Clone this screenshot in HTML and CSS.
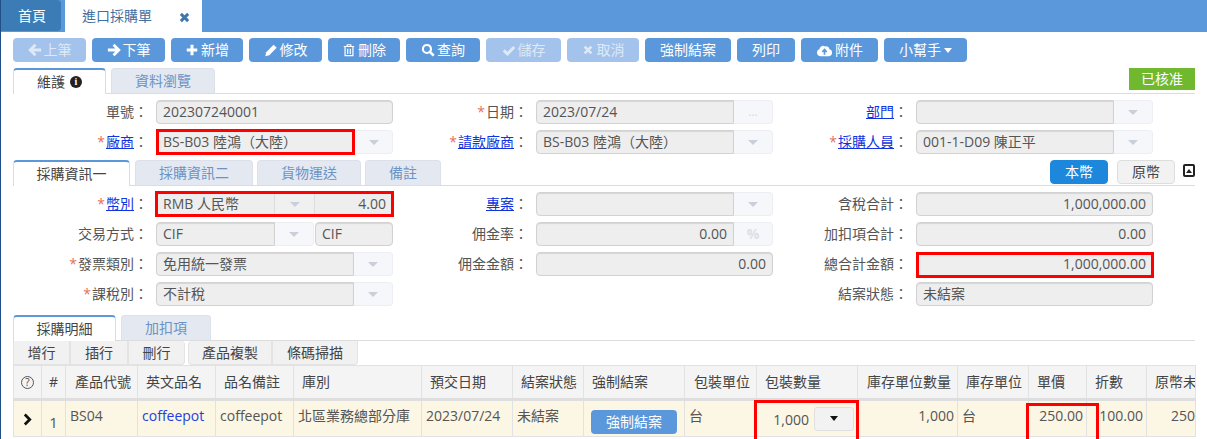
FILE: index.html
```html
<!DOCTYPE html>
<html lang="zh-Hant">
<head>
<meta charset="utf-8">
<title>進口採購單</title>
<link rel="stylesheet" href="styles.css">
</head>
<body>
<svg class="sprite" aria-hidden="true">
  <symbol id="i-left" viewBox="0 0 16 16"><path d="M8.5 2 L2.5 8 L8.5 14 M3 8 H15" fill="none" stroke="currentColor" stroke-width="3.2"/></symbol>
  <symbol id="i-right" viewBox="0 0 16 16"><path d="M7.5 2 L13.5 8 L7.5 14 M13 8 H1" fill="none" stroke="currentColor" stroke-width="3.2"/></symbol>
  <symbol id="i-plus" viewBox="0 0 16 16"><path d="M8 2 V14 M2 8 H14" fill="none" stroke="currentColor" stroke-width="3.4"/></symbol>
  <symbol id="i-pencil" viewBox="0 0 16 16"><path d="M11 2 L14.5 5.5 L6 14 L1.5 15 L2.5 10.5 Z" fill="currentColor"/></symbol>
  <symbol id="i-trash" viewBox="0 0 16 16"><path d="M2 4 H14 M6 4 V2 H10 V4 M3.5 4 V14.5 H12.5 V4 M6.5 6.5 V12.5 M9.5 6.5 V12.5" fill="none" stroke="currentColor" stroke-width="1.4"/></symbol>
  <symbol id="i-search" viewBox="0 0 16 16"><circle cx="6.8" cy="6.8" r="4.6" fill="none" stroke="currentColor" stroke-width="2.4"/><path d="M10.2 10.2 L14.5 14.5" stroke="currentColor" stroke-width="3"/></symbol>
  <symbol id="i-check" viewBox="0 0 16 16"><path d="M2 8.5 L6.3 12.5 L14 4.5" fill="none" stroke="currentColor" stroke-width="3.4"/></symbol>
  <symbol id="i-times" viewBox="0 0 16 16"><path d="M3.5 3.5 L12.5 12.5 M12.5 3.5 L3.5 12.5" fill="none" stroke="currentColor" stroke-width="3.6"/></symbol>
  <symbol id="i-cloud" viewBox="0 0 18 16"><path d="M4.5 14 A3.8 3.8 0 0 1 3.6 6.6 A4 4 0 0 1 9.6 3.6 A3.6 3.6 0 0 1 14.3 6.6 A3.8 3.8 0 0 1 14 14 Z" fill="currentColor"/><path d="M9 12.5 V7.5 M6.6 9.6 L9 7 L11.4 9.6" fill="none" stroke="#5b98db" stroke-width="1.8"/></symbol>
</svg>

<div class="app">
  <header class="topbar">
    <a class="home-tab">首頁</a>
    <a class="page-tab">進口採購單<svg class="page-close"><use href="#i-times"/></svg></a>
  </header>

  <main class="content">
    <div class="toolbar">
      <button class="btn off w73"><svg class="ic"><use href="#i-left"/></svg>上筆</button>
      <button class="btn w73"><svg class="ic"><use href="#i-right"/></svg>下筆</button>
      <button class="btn w72"><svg class="ic"><use href="#i-plus"/></svg>新增</button>
      <button class="btn w73"><svg class="ic"><use href="#i-pencil"/></svg>修改</button>
      <button class="btn w72"><svg class="ic"><use href="#i-trash"/></svg>刪除</button>
      <button class="btn w74"><svg class="ic"><use href="#i-search"/></svg>查詢</button>
      <button class="btn off w75"><svg class="ic"><use href="#i-check"/></svg>儲存</button>
      <button class="btn off w72"><svg class="ic sm"><use href="#i-times"/></svg>取消</button>
      <button class="btn w86">強制結案</button>
      <button class="btn w58">列印</button>
      <button class="btn w77"><svg class="ic wide"><use href="#i-cloud"/></svg>附件</button>
      <button class="btn w83">小幫手<span class="caret"></span></button>
    </div>

    <nav class="tabs t1">
      <a class="tab on w93">維護 <span class="info">i</span></a>
      <a class="tab w104">資料瀏覽</a>
      <span class="status">已核准</span>
    </nav>

    <section class="form">
      <label class="lbl">單號：</label>
      <div class="field"><span class="inp">202307240001</span></div>
      <label class="lbl"><i>*</i>日期：</label>
      <div class="field"><span class="inp joined">2023/07/24</span><span class="add w39 dots">...</span></div>
      <label class="lbl"><a>部門</a>：</label>
      <div class="field"><span class="inp joined"></span><span class="add w39"><b class="tri"></b></span></div>

      <label class="lbl"><i>*</i><a>廠商</a>：</label>
      <div class="field"><span class="inp joined">BS-B03 陸鴻（大陸）</span><span class="add w38"><b class="tri"></b></span><span class="mark m-vendor"></span></div>
      <label class="lbl"><i>*</i><a>請款廠商</a>：</label>
      <div class="field"><span class="inp joined">BS-B03 陸鴻（大陸）</span><span class="add w39"><b class="tri"></b></span></div>
      <label class="lbl"><i>*</i><a>採購人員</a>：</label>
      <div class="field"><span class="inp joined">001-1-D09 陳正平</span><span class="add w39"><b class="tri"></b></span></div>
    </section>

    <nav class="tabs t2">
      <a class="tab on w117">採購資訊一</a>
      <a class="tab w118">採購資訊二</a>
      <a class="tab w104">貨物運送</a>
      <a class="tab w76">備註</a>
      <div class="cur">
        <button class="cur-btn act">本幣</button>
        <button class="cur-btn">原幣</button>
        <span class="collapse"><b></b></span>
      </div>
    </nav>

    <section class="form">
      <label class="lbl"><i>*</i><a>幣別</a>：</label>
      <div class="field marked"><span class="inp joined w118i">RMB 人民幣</span><span class="add w40"><b class="tri"></b></span><span class="inp num mid">4.00</span><span class="mark m-cur"></span></div>
      <label class="lbl"><a>專案</a>：</label>
      <div class="field"><span class="inp joined"></span><span class="add w39"><b class="tri"></b></span></div>
      <label class="lbl">含稅合計：</label>
      <div class="field"><span class="inp num">1,000,000.00</span></div>

      <label class="lbl">交易方式：</label>
      <div class="field"><span class="inp joined w118i">CIF</span><span class="add w40 sep"><b class="tri"></b></span><span class="inp">CIF</span></div>
      <label class="lbl">佣金率：</label>
      <div class="field"><span class="inp joined num">0.00</span><span class="add w39 pct">%</span></div>
      <label class="lbl">加扣項合計：</label>
      <div class="field"><span class="inp num">0.00</span></div>

      <label class="lbl"><i>*</i>發票類別：</label>
      <div class="field"><span class="inp joined">免用統一發票</span><span class="add w39"><b class="tri"></b></span></div>
      <label class="lbl">佣金金額：</label>
      <div class="field"><span class="inp num">0.00</span></div>
      <label class="lbl">總合計金額：</label>
      <div class="field"><span class="inp num">1,000,000.00</span><span class="mark m-total"></span></div>

      <label class="lbl"><i>*</i>課稅別：</label>
      <div class="field"><span class="inp joined">不計稅</span><span class="add w39"><b class="tri"></b></span></div>
      <span></span><span></span>
      <label class="lbl">結案狀態：</label>
      <div class="field"><span class="inp">未結案</span></div>
    </section>

    <nav class="tabs t3">
      <a class="tab on w103">採購明細</a>
      <a class="tab w90">加扣項</a>
    </nav>

    <div class="grid-tools">
      <div class="gt-group"><button class="gt w57">增行</button><button class="gt w58b">插行</button><button class="gt w57">刪行</button></div>
      <div class="gt-group"><button class="gt w84">產品複製</button><button class="gt w86b">條碼掃描</button></div>
    </div>

    <table class="grid">
      <colgroup>
        <col class="c28"><col class="c24"><col class="c72"><col class="c78"><col class="c78"><col class="c128"><col class="c91"><col class="c71"><col class="c101"><col class="c72"><col class="c101"><col class="c100"><col class="c71"><col class="c58"><col class="c60"><col class="c49">
      </colgroup>
      <thead>
        <tr>
          <th class="ctr"><span class="help">?</span></th><th class="ctr">#</th><th>產品代號</th><th>英文品名</th><th>品名備註</th><th>庫別</th><th>預交日期</th><th>結案狀態</th><th>強制結案</th><th>包裝單位</th><th>包裝數量</th><th>庫存單位數量</th><th>庫存單位</th><th>單價</th><th>折數</th><th>原幣未稅金額</th>
        </tr>
      </thead>
      <tbody>
        <tr>
          <td class="ctr"><svg class="chev" viewBox="0 0 10 14"><path d="M2 1.5 L7.5 7 L2 12.5" fill="none" stroke="#111" stroke-width="3"/></svg></td>
          <td class="ctr low">1</td>
          <td>BS04</td>
          <td class="link">coffeepot</td>
          <td>coffeepot</td>
          <td>北區業務總部分庫</td>
          <td>2023/07/24</td>
          <td>未結案</td>
          <td class="ctr"><button class="cell-btn">強制結案</button></td>
          <td>台</td>
          <td class="qty"><span class="mark m-qty"></span><span class="low">1,000</span><span class="dd"><b></b></span></td>
          <td class="r">1,000</td>
          <td>台</td>
          <td class="r"><span class="mark m-price"></span>250.00</td>
          <td class="r">100.00</td>
          <td class="r clip">250,000.00</td>
        </tr>
      </tbody>
    </table>
  </main>
</div>
</body>
</html>
```

FILE: styles.css
```css
* { box-sizing: border-box; }
html, body { margin: 0; height: 100%; overflow: hidden; background: #fff; }
body { font: 14px/20px "Open Sans", "Noto Sans CJK TC", sans-serif; color: #444; }
.sprite { display: none; }
button { font: inherit; border: 0; padding: 0; }

.app { border-left: 1px solid #1f4f86; height: 439px; overflow: hidden; }

.topbar { height: 32px; background: #5b98db; display: flex; align-items: flex-start; }
.home-tab { width: 60px; height: 31px; background: #3c7cb6; color: #fff; border-radius: 0 4px 4px 0; display: flex; align-items: center; padding-left: 17px; }
.page-tab { margin-left: 4px; width: 137px; height: 32px; background: #fff; color: #44709f; display: flex; align-items: center; padding-left: 17px; }
.page-close { width: 13px; height: 13px; margin-left: 26px; margin-top: 3px; color: #3f78ac; }

.content { padding: 0 12px; }

.toolbar { display: flex; gap: 6px; padding-top: 6px; }
.btn { height: 24px; background: #5b98db; color: #fff; border-radius: 4px; display: flex; align-items: center; justify-content: center; white-space: nowrap; }
.btn.off { background: #a3c3ec; color: #dfe9f6; }
.ic { width: 14px; height: 14px; margin-right: 2px; }
.ic.sm { width: 12px; height: 12px; margin-right: 3px; }
.ic.wide { width: 17px; height: 15px; }
.w58 { width: 58px; } .w72 { width: 72px; } .w73 { width: 73px; } .w74 { width: 74px; }
.w75 { width: 75px; } .w77 { width: 77px; } .w83 { width: 83px; } .w86 { width: 86px; }
.caret { width: 0; height: 0; border: 4px solid transparent; border-top: 5px solid #fff; border-bottom: 0; margin-left: 3px; }

.tabs { display: flex; align-items: flex-start; gap: 4px; height: 26px; border-bottom: 1px solid #dcdcdc; }
.t1, .t2 { margin-top: 6px; }
.t3 { margin-top: 9px; }
.tab { height: 25px; background: #e4e8f1; color: #6c93c4; border: 1px solid #dbe0ea; border-bottom: 0; border-radius: 4px 4px 0 0; display: flex; align-items: center; justify-content: center; gap: 5px; }
.tab.on { background: #fff; color: #444; border-top: 2px solid #5b98db; border-left-color: #dcdcdc; border-right-color: #dcdcdc; height: 26px; margin-right: 1px; }
.w93 { width: 93px; } .w104 { width: 104px; } .w117 { width: 117px; } .w118 { width: 118px; }
.w76 { width: 76px; } .w103 { width: 103px; } .w90 { width: 90px; }
.info { width: 12px; height: 12px; border-radius: 50%; background: #222; color: #fff; font: bold 10px/12px "Liberation Serif", serif; text-align: center; }
.status { margin-left: auto; width: 66px; height: 22px; background: #70b92f; color: #fff; display: flex; align-items: center; justify-content: center; }

.cur { margin-left: auto; display: flex; align-items: flex-start; height: 24px; }
.cur-btn { width: 58px; height: 24px; border-radius: 4px; background: #f2f2f2; color: #444; border: 1px solid #dedede; margin-left: 9px; }
.cur-btn.act { background: #1d87dc; color: #fff; border-color: #1d87dc; margin-left: 0; }
.collapse { width: 12px; height: 13px; margin: 4px 0 0 8px; border: 2px solid #222; border-radius: 2px; display: flex; align-items: center; justify-content: center; }
.collapse b { width: 0; height: 0; border: 3px solid transparent; border-bottom: 4px solid #222; border-top: 0; }

.form { display: grid; grid-template-columns: repeat(3, 143px 237px); grid-auto-rows: 24px; row-gap: 6px; padding-top: 6px; }
.lbl { display: flex; justify-content: flex-end; align-items: center; padding-right: 8px; white-space: nowrap; color: #555; }
.lbl i { color: #e4705a; font-style: normal; margin-right: 1px; }
.lbl a { color: #1133dd; text-decoration: underline; }
.field { display: flex; position: relative; min-width: 0; }
.inp { flex: 1; min-width: 0; height: 24px; background: #eee; border: 1px solid #d2d2d2; border-radius: 4px; box-shadow: inset 0 1px 1px rgba(0,0,0,.1); padding: 0 6px; display: flex; align-items: center; white-space: nowrap; color: #555; }
.inp.joined { border-radius: 4px 0 0 4px; }
.inp.num { justify-content: flex-end; }
.inp.w118i { flex: none; width: 119px; }
.inp.mid { border-radius: 0 4px 4px 0; flex: 1; border-left: 0; }
.add { height: 24px; background: #f6f7fa; border: 1px solid #eceef3; border-left: 0; border-radius: 0 4px 4px 0; display: flex; align-items: center; justify-content: center; color: #d4d8de; }
.w38 { width: 38px; flex: none; } .w39 { width: 39px; flex: none; } .w40 { width: 40px; flex: none; }
.add.w40 { border-radius: 0; }
.add.sep { border-radius: 0 4px 4px 0; margin-right: 1px; width: 39px; }
.dots { font-size: 12px; }
.pct { font-weight: 700; color: #dbe0e7; }
.tri { width: 0; height: 0; border: 5px solid transparent; border-top: 5px solid #c9d0d9; border-bottom: 0; }

.marked .inp, .marked .add { border-color: #ddd; box-shadow: none; }
.marked .add { background: #f0f0f0; }

.mark { position: absolute; z-index: 2; border: 3px solid #f00; pointer-events: none; }
.m-vendor { top: -1px; left: 0; width: 199px; height: 26px; }
.m-cur { top: -1px; left: -1px; right: -1px; height: 26px; }
.m-total { top: 0; left: 0; right: -1px; height: 26px; }
.m-qty { top: -1px; left: -3px; right: -2px; height: 50px; }
.m-price { top: 2px; left: -3px; right: -13px; height: 50px; }

.grid-tools { display: flex; gap: 3px; height: 24px; }
.gt-group { display: flex; }
.gt { height: 24px; background: #f1f1f1; color: #444; border: 1px solid #e3e3e3; border-top: 0; }
.gt-group:last-child .gt:last-child { border-radius: 0 0 4px 0; }
.gt-group:last-child .gt:first-child { border-radius: 4px 0 0 4px; }
.gt-group:first-child .gt:last-child { border-radius: 0 4px 4px 0; }
.w57 { width: 57px; } .w58b { width: 58px; } .w84 { width: 84px; } .w86b { width: 86px; }

.grid { table-layout: fixed; width: 1182px; border-collapse: collapse; }
.c28 { width: 28px; } .c24 { width: 24px; } .c72 { width: 72px; } .c78 { width: 78px; }
.c128 { width: 128px; } .c91 { width: 91px; } .c71 { width: 71px; } .c101 { width: 101px; }
.c100 { width: 100px; } .c58 { width: 58px; } .c60 { width: 60px; } .c49 { width: 49px; }
.grid th { height: 34px; background: #f4f4f4; border: 1px solid #e2e2e2; border-bottom: 3px solid #dedede; font-weight: 400; text-align: left; padding: 0 8px; white-space: nowrap; overflow: hidden; color: #444; }
.grid td { height: 37px; background: #fcf6e4; border: 1px solid #e2e2e2; padding: 0 3px 6px 4px; white-space: nowrap; color: #555; position: relative; }
.grid th:nth-child(3), .grid th:nth-child(10), .grid th:nth-child(12) { padding: 0 0 0 9px; }
.grid .ctr { text-align: center; padding-left: 0; padding-right: 0; }
.grid .r { text-align: right; }
.grid td .low { position: relative; top: 3px; }
.grid td.low { padding-top: 6px; padding-bottom: 0; font-size: 15px; }
.grid td.link { color: #1f3fe0; }
.grid td.clip { overflow: hidden; padding-right: 0; text-align: left; padding-left: 24px; }
.help { display: inline-block; width: 13px; height: 13px; border: 1px solid #555; border-radius: 50%; font-size: 10px; line-height: 11px; text-align: center; vertical-align: 1px; }
.chev { width: 9px; height: 13px; vertical-align: -5px; }
.cell-btn { width: 86px; height: 24px; background: #5b98db; color: #fff; border-radius: 4px; margin: 6px 0 0 7px; display: block; }
.grid td:nth-child(9) { padding-bottom: 0; }
.grid td.qty { padding: 0 3px 0 0; text-align: right; }
.dd { display: inline-flex; align-items: center; justify-content: center; width: 40px; height: 24px; margin-left: 5px; background: #f2f2f2; border: 1px solid #e0e0e0; border-radius: 3px; vertical-align: middle; }
.dd b { width: 0; height: 0; border: 4px solid transparent; border-top: 5px solid #111; border-bottom: 0; }
```
